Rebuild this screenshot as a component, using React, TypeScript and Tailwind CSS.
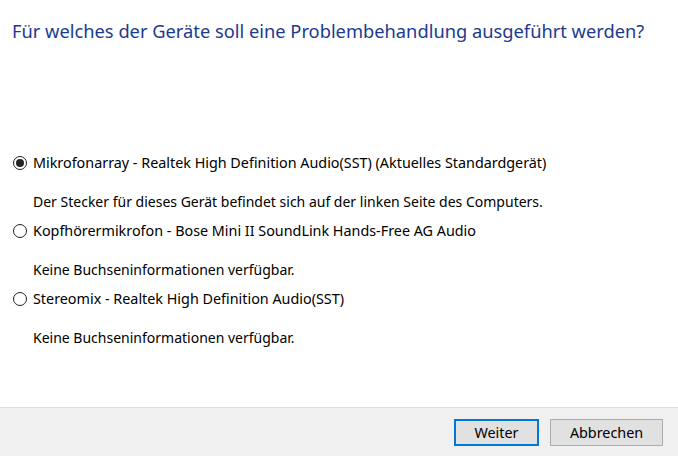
const devices = [
  {
    name: "Mikrofonarray - Realtek High Definition Audio(SST) (Aktuelles Standardgerät)",
    info: "Der Stecker für dieses Gerät befindet sich auf der linken Seite des Computers.",
    checked: true,
  },
  {
    name: "Kopfhörermikrofon - Bose Mini II SoundLink Hands-Free AG Audio",
    info: "Keine Buchseninformationen verfügbar.",
    checked: false,
  },
  {
    name: "Stereomix - Realtek High Definition Audio(SST)",
    info: "Keine Buchseninformationen verfügbar.",
    checked: false,
  },
]

function Radio({ checked }: { checked: boolean }) {
  return (
    <span className="w-[14px] h-[14px] rounded-full border border-[#222] bg-white flex items-center justify-center shrink-0">
      {checked && <span className="w-[8px] h-[8px] rounded-full bg-[#222]" />}
    </span>
  )
}

export default function App() {
  return (
    <div
      className="w-[678px] h-[456px] flex flex-col bg-white text-black"
      style={{ fontFamily: '"Noto Sans", "Open Sans", sans-serif' }}
    >
      <div className="flex-1 flex flex-col">
        <h1 className="pt-[19px] pl-[12px] h-[42px] text-[18.3px] leading-[24px] whitespace-nowrap text-[#1b3a8f]">
          Für welches der Geräte soll eine Problembehandlung ausgeführt werden?
        </h1>

        <div className="mt-[111px] flex flex-col gap-[9px] text-[14.35px]">
          {devices.map((d) => (
            <div key={d.name} className="flex flex-col">
              <label className="h-[20px] flex items-center gap-[6px] pl-[13px]">
                <Radio checked={d.checked} />
                <span className="leading-[20px]">{d.name}</span>
              </label>
              <div className="mt-[19px] h-[20px] leading-[20px] pl-[33px] text-[14px]">{d.info}</div>
            </div>
          ))}
        </div>
      </div>

      <div className="h-[49px] shrink-0 border-t border-[#dfdfdf] bg-[#f0f0f0] flex items-start justify-end gap-[11px] pt-[11px] pr-[15px] text-[14.35px]">
        <button className="w-[85px] h-[27px] border-2 border-[#0078d7] bg-[#e1e1e1]">Weiter</button>
        <button className="w-[113px] h-[27px] border border-[#adadad] bg-[#e1e1e1]">Abbrechen</button>
      </div>
    </div>
  )
}
